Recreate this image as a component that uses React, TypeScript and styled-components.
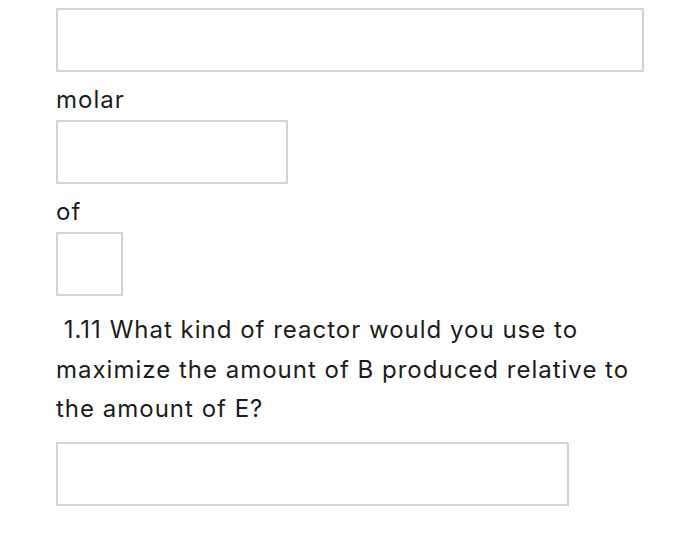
import styled, { createGlobalStyle } from 'styled-components'

const GlobalStyle = createGlobalStyle`
    html, body {
        margin: 0;
        padding: 0;
        background: #ffffff;
    }
    body {
        font-family: Inter, "Liberation Sans", Arial, sans-serif;
        color: #1c1c1c;
    }
`

const Page = styled.div`
    width: 700px;
    height: 556px;
    overflow: hidden;
    padding: 8px 0 0 56px;
    box-sizing: border-box;
`

const AnswerBox = styled.div<{ $width: number }>`
    width: ${({ $width }) => $width}px;
    height: 64px;
    box-sizing: border-box;
    border: 2px solid #d3d3d3;
    background: #fff;
`

const Label = styled.div`
    font-size: 24px;
    letter-spacing: 1px;
    line-height: 26px;
    padding-top: 15px;
    margin-bottom: 7px;
`

const Question = styled.p`
    width: 600px;
    margin: 14px 0 13.5px;
    font-size: 24px;
    letter-spacing: 1px;
    line-height: 39.5px;
`

export default function App() {
    return (
        <>
            <GlobalStyle />
            <Page>
                <AnswerBox $width={588} />
                <Label>molar</Label>
                <AnswerBox $width={232} />
                <Label>of</Label>
                <AnswerBox $width={67} />
                <Question>
                    &nbsp;1.11 What kind of reactor would you use to maximize the amount of B produced
                    relative to the amount of E?
                </Question>
                <AnswerBox $width={513} />
            </Page>
        </>
    )
}
